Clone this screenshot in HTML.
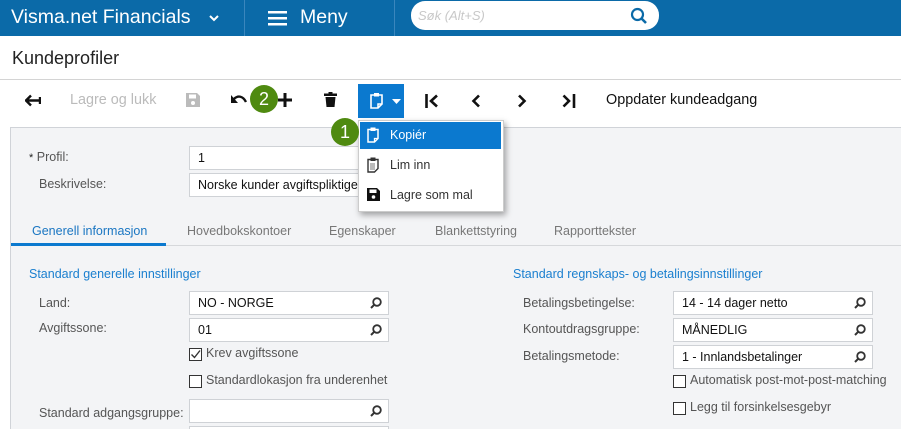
<!DOCTYPE html>
<html><head><meta charset="utf-8">
<style>
*{box-sizing:border-box;margin:0;padding:0}
html{width:901px;height:429px;overflow:hidden}
body{width:901px;height:429px;overflow:hidden;background:#fff;font-family:"Liberation Sans",Arial,sans-serif;position:relative}
.abs{position:absolute}
.hdr{left:0;top:0;width:901px;height:36px;background:#0b6aa8}
.hdr .t{color:#fff;font-size:19.5px;top:6px;white-space:nowrap}
.sep{top:0;width:1px;height:36px;background:#3a86bd}
.search{left:411px;top:1px;width:248px;height:29px;background:#fff;border-radius:14px}
.lbl{font-size:12.5px;color:#555;white-space:nowrap}
.inp{background:#fff;border:1px solid #cfd2d6;height:24px;font-size:12.5px;color:#111;padding:4px 0 0 8px;white-space:nowrap;overflow:hidden}
.mag{position:absolute;right:6px;top:5px}
.cb{width:13px;height:13px;border:1px solid #333;background:#fff}
.tab{font-size:12.5px;color:#777;top:224px;white-space:nowrap}
.badge{width:28px;height:28px;border-radius:14px;background:#4f8a10;color:#fff;font-size:18px;text-align:center;line-height:28px}
.tb{font-size:14.4px;white-space:nowrap}
</style></head><body>
<div class="abs hdr">
  <div class="abs t" style="left:11px">Visma.net Financials</div>
  <svg class="abs" style="left:208px;top:13px" width="12" height="10" viewBox="0 0 12 10"><path d="M2 3l4 4 4-4" stroke="#fff" stroke-width="2" fill="none"/></svg>
  <div class="abs sep" style="left:244px"></div>
  <svg class="abs" style="left:268px;top:10px" width="20" height="16"><rect x="0" y="1" width="19" height="2.5" fill="#fff"/><rect x="0" y="7" width="19" height="2.5" fill="#fff"/><rect x="0" y="13" width="19" height="2.5" fill="#fff"/></svg>
  <div class="abs t" style="left:300px">Meny</div>
  <div class="abs sep" style="left:394px"></div>
  <div class="abs search"><span class="abs" style="left:7px;top:7px;font-size:13px;font-style:italic;color:#c8c8c8">Søk (Alt+S)</span>
  <svg class="abs" style="left:219px;top:6px" width="18" height="18"><circle cx="7.5" cy="7.5" r="5.5" stroke="#0b6aa8" stroke-width="2.2" fill="none"/><path d="M11.5 11.5l4.5 4.5" stroke="#0b6aa8" stroke-width="2.6"/></svg></div>
</div>
<div class="abs" style="left:12px;top:48px;font-size:18px;color:#222">Kundeprofiler</div>
<div class="abs" style="left:0;top:79px;width:901px;height:1px;background:#d4d4d4"></div>
<svg class="abs" style="left:25px;top:94px" width="16" height="13"><path d="M1 6.5h14M6 1.5L1 6.5l5 5M15 3v7" stroke="#111" stroke-width="2.4" fill="none"/></svg>
<div class="abs tb" style="left:70px;top:92px;color:#bbb">Lagre og lukk</div>
<svg class="abs" style="left:186px;top:93px" width="14" height="14"><path d="M0 0h11l3 3v11H0z" fill="#bbb"/><rect x="3" y="1.5" width="7" height="4" fill="#fff"/><circle cx="7" cy="10" r="2" fill="#fff"/></svg>
<svg class="abs" style="left:231px;top:94px" width="16" height="12"><path d="M3 5c4-4 9-3 12 3" stroke="#111" stroke-width="2.4" fill="none"/><path d="M0 1v8h7z" fill="#111"/></svg>
<div class="abs badge" style="left:250px;top:85px">2</div>
<svg class="abs" style="left:278px;top:93px" width="14" height="14"><path d="M7 0v14M0 7h14" stroke="#111" stroke-width="3"/></svg>
<svg class="abs" style="left:324px;top:92px" width="13" height="15"><rect x="0" y="1.5" width="13" height="2.5" fill="#111"/><rect x="4.5" y="0" width="4" height="2" fill="#111"/><path d="M1.5 5h10l-1 10h-8z" fill="#111"/></svg>
<div class="abs" style="left:358px;top:84px;width:46px;height:34px;background:#0b79cf"></div>
<svg class="abs" style="left:370px;top:92px" width="13" height="17"><path d="M1 3h11v9l-4 4H1z" stroke="#fff" stroke-width="1.6" fill="none"/><rect x="4" y="1" width="5" height="3.5" fill="#fff"/><path d="M8 16v-4h4" stroke="#fff" stroke-width="1.5" fill="none"/></svg>
<svg class="abs" style="left:392px;top:99px" width="9" height="5"><path d="M0 0h9L4.5 5z" fill="#fff"/></svg>
<svg class="abs" style="left:425px;top:94px" width="14" height="14"><path d="M1.5 0v14" stroke="#111" stroke-width="2.6"/><path d="M12 1.5L6 7l6 5.5" stroke="#111" stroke-width="2.6" fill="none"/></svg>
<svg class="abs" style="left:471px;top:94px" width="10" height="14"><path d="M8 1.5L2.5 7 8 12.5" stroke="#111" stroke-width="2.6" fill="none"/></svg>
<svg class="abs" style="left:517px;top:94px" width="10" height="14"><path d="M2 1.5L7.5 7 2 12.5" stroke="#111" stroke-width="2.6" fill="none"/></svg>
<svg class="abs" style="left:562px;top:94px" width="14" height="14"><path d="M1.5 1.5L7 7l-5.5 5.5" stroke="#111" stroke-width="2.6" fill="none"/><path d="M12 0v14" stroke="#111" stroke-width="2.6"/></svg>
<div class="abs tb" style="left:606px;top:92px;color:#111">Oppdater kundeadgang</div>
<div class="abs" style="left:10px;top:127px;width:891px;height:302px;background:#f3f4f6;border:1px solid #d0d3d8;border-bottom:none;border-right:none"></div>
<div class="abs lbl" style="left:29px;top:150px"><span style="color:#222;font-size:11px">*</span> Profil:</div>
<div class="abs inp" style="left:189px;top:146px;width:200px">1</div>
<div class="abs lbl" style="left:39px;top:177px">Beskrivelse:</div>
<div class="abs inp" style="left:189px;top:173px;width:200px">Norske kunder avgiftspliktige</div>
<div class="abs" style="left:10px;top:245px;width:891px;height:1px;background:#d6d8db"></div>
<div class="abs tab" style="left:32px;color:#1a76c2">Generell informasjon</div>
<div class="abs" style="left:11px;top:243px;width:155px;height:3px;background:#0b79cf"></div>
<div class="abs tab" style="left:187px">Hovedbokskontoer</div>
<div class="abs tab" style="left:329px">Egenskaper</div>
<div class="abs tab" style="left:435px">Blankettstyring</div>
<div class="abs tab" style="left:554px">Rapporttekster</div>
<div class="abs" style="left:29px;top:267px;font-size:12.5px;color:#1a7fcf">Standard generelle innstillinger</div>
<div class="abs" style="left:513px;top:267px;font-size:12.5px;color:#1a7fcf">Standard regnskaps- og betalingsinnstillinger</div>
<div class="abs lbl" style="left:39px;top:296px">Land:</div>
<div class="abs inp" style="left:189px;top:291px;width:200px">NO - NORGE<svg class="mag" width="12" height="12"><circle cx="7" cy="5" r="3.8" stroke="#333" stroke-width="1.8" fill="none"/><path d="M4.3 7.7L1 11" stroke="#333" stroke-width="2"/></svg></div>
<div class="abs lbl" style="left:39px;top:321px">Avgiftssone:</div>
<div class="abs inp" style="left:189px;top:318px;width:200px">01<svg class="mag" width="12" height="12"><circle cx="7" cy="5" r="3.8" stroke="#333" stroke-width="1.8" fill="none"/><path d="M4.3 7.7L1 11" stroke="#333" stroke-width="2"/></svg></div>
<div class="abs cb" style="left:189px;top:348px"><svg width="11" height="11" style="position:absolute;left:0;top:0"><path d="M1.5 5.5l3 3 5.5-7" stroke="#333" stroke-width="1.4" fill="none"/></svg></div>
<div class="abs lbl" style="left:206px;top:346px">Krev avgiftssone</div>
<div class="abs cb" style="left:189px;top:375px"></div>
<div class="abs lbl" style="left:206px;top:373px">Standardlokasjon fra underenhet</div>
<div class="abs lbl" style="left:39px;top:406px">Standard adgangsgruppe:</div>
<div class="abs inp" style="left:189px;top:399px;width:200px"><svg class="mag" width="12" height="12"><circle cx="7" cy="5" r="3.8" stroke="#333" stroke-width="1.8" fill="none"/><path d="M4.3 7.7L1 11" stroke="#333" stroke-width="2"/></svg></div>
<div class="abs" style="left:189px;top:426px;width:200px;height:3px;background:#fff;border:1px solid #cfd2d6;border-bottom:none"></div>
<div class="abs lbl" style="left:523px;top:296px">Betalingsbetingelse:</div>
<div class="abs inp" style="left:673px;top:291px;width:200px">14 - 14 dager netto<svg class="mag" width="12" height="12"><circle cx="7" cy="5" r="3.8" stroke="#333" stroke-width="1.8" fill="none"/><path d="M4.3 7.7L1 11" stroke="#333" stroke-width="2"/></svg></div>
<div class="abs lbl" style="left:523px;top:322px">Kontoutdragsgruppe:</div>
<div class="abs inp" style="left:673px;top:318px;width:200px">MÅNEDLIG<svg class="mag" width="12" height="12"><circle cx="7" cy="5" r="3.8" stroke="#333" stroke-width="1.8" fill="none"/><path d="M4.3 7.7L1 11" stroke="#333" stroke-width="2"/></svg></div>
<div class="abs lbl" style="left:523px;top:349px">Betalingsmetode:</div>
<div class="abs inp" style="left:673px;top:345px;width:200px">1 - Innlandsbetalinger<svg class="mag" width="12" height="12"><circle cx="7" cy="5" r="3.8" stroke="#333" stroke-width="1.8" fill="none"/><path d="M4.3 7.7L1 11" stroke="#333" stroke-width="2"/></svg></div>
<div class="abs cb" style="left:673px;top:375px"></div>
<div class="abs lbl" style="left:690px;top:373px">Automatisk post-mot-post-matching</div>
<div class="abs cb" style="left:673px;top:402px"></div>
<div class="abs lbl" style="left:690px;top:400px">Legg til forsinkelsesgebyr</div>
<div class="abs" style="left:358px;top:120px;width:146px;height:92px;background:#fff;border:1px solid #ccc;box-shadow:2px 3px 6px rgba(0,0,0,.35)"></div>
<div class="abs" style="left:360px;top:122px;width:141px;height:27px;background:#0b79cf"></div>
<svg class="abs" style="left:367px;top:127px" width="12" height="16"><path d="M1 2.5h10v9l-3.5 3.5H1z" stroke="#fff" stroke-width="1.5" fill="none"/><rect x="3.5" y="0.5" width="5" height="3.5" fill="#fff"/><path d="M7.5 15v-3.5h3.5" stroke="#fff" stroke-width="1.3" fill="none"/></svg>
<div class="abs" style="left:390px;top:128px;font-size:12.5px;color:#fff">Kopiér</div>
<svg class="abs" style="left:367px;top:157px" width="12" height="16"><path d="M1 2.5h10v9l-3.5 3.5H1z" stroke="#333" stroke-width="1.4" fill="none"/><rect x="3.5" y="0.5" width="5" height="3.5" fill="#333"/><path d="M3 6h5v7H3z" fill="#bbb"/></svg>
<div class="abs" style="left:390px;top:158px;font-size:12.5px;color:#333">Lim inn</div>
<svg class="abs" style="left:367px;top:188px" width="13" height="13"><path d="M0 0h10l3 3v10H0z" fill="#111"/><rect x="2.5" y="1.5" width="7" height="3.5" fill="#fff"/><circle cx="6.5" cy="9" r="1.8" fill="#fff"/></svg>
<div class="abs" style="left:390px;top:188px;font-size:12.5px;color:#333">Lagre som mal</div>
<div class="abs badge" style="left:331px;top:118px">1</div>
</body></html>
